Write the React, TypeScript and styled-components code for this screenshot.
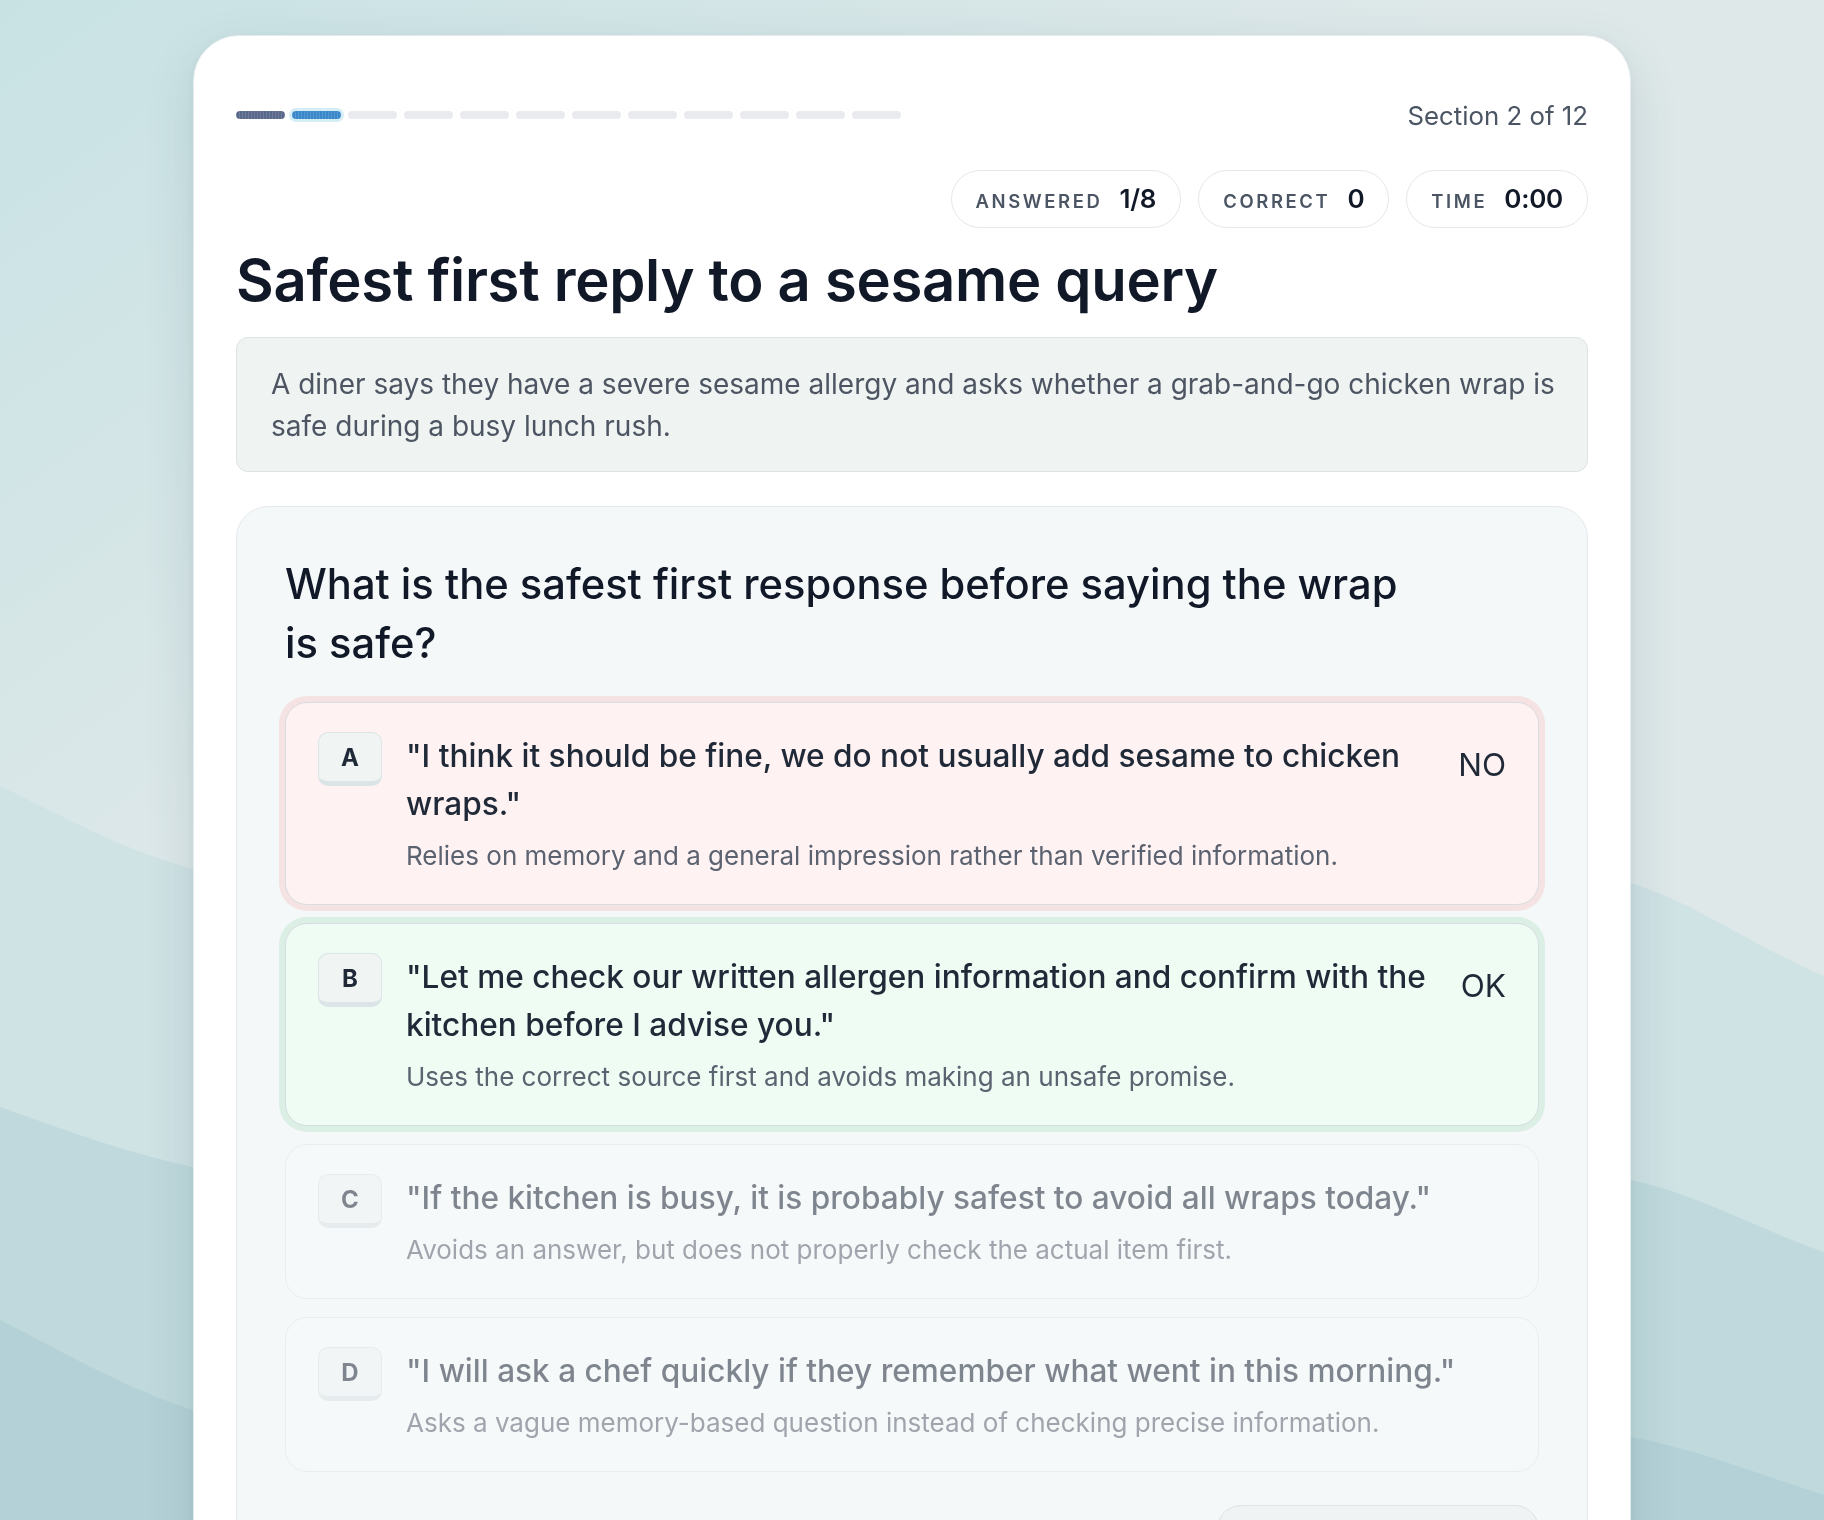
import React from 'react'
import styled, { createGlobalStyle } from 'styled-components'

const GlobalStyle = createGlobalStyle`
  html, body {
    margin: 0;
    padding: 0;
  }
  body {
    font-family: Inter, 'Noto Sans', 'Liberation Sans', sans-serif;
    color: #111827;
    background: #d3e6e8;
    -webkit-font-smoothing: antialiased;
  }
  * {
    box-sizing: border-box;
  }
`

const Backdrop = styled.svg`
  position: fixed;
  inset: 0;
  width: 100%;
  height: 100%;
  z-index: 0;
`

const Page = styled.div`
  position: relative;
  z-index: 1;
  display: flex;
  justify-content: center;
  padding: 35px 0 80px;
`

const Card = styled.main`
  width: 1438px;
  background: #ffffff;
  border: 1px solid #e4ecee;
  border-radius: 46px;
  box-shadow: 0 18px 50px rgba(40, 80, 92, 0.14), 0 2px 8px rgba(40, 80, 92, 0.06);
  padding: 64px 42px 60px;
`

const TopRow = styled.div`
  display: flex;
  align-items: center;
  justify-content: space-between;
  height: 30px;
`

const Progress = styled.div`
  display: flex;
  gap: 7px;
`

const Segment = styled.span<{ $state: 'done' | 'current' | 'todo' }>`
  width: 49px;
  height: 8px;
  border-radius: 4px;
  background: ${p =>
    p.$state === 'done' ? '#58678a' : p.$state === 'current' ? '#3a87c9' : '#e9ebef'};
  background-image: ${p =>
    p.$state === 'todo'
      ? 'none'
      : 'repeating-linear-gradient(90deg, rgba(255,255,255,0.14) 0 1px, transparent 1px 3px)'};
  box-shadow: ${p => (p.$state === 'current' ? '0 0 0 3px #d5edf4' : 'none')};
`

const SectionLabel = styled.span`
  font-size: 25.8px;
  color: #4b5563;
`

const Stats = styled.div`
  display: flex;
  justify-content: flex-end;
  gap: 17px;
  margin-top: 40px;
`

const Chip = styled.div`
  display: flex;
  align-items: baseline;
  gap: 17px;
  height: 58px;
  padding: 12px 24px 0;
  border: 1.5px solid #e5e7eb;
  border-radius: 999px;
  background: #ffffff;
`

const ChipLabel = styled.span`
  font-size: 18.5px;
  font-weight: 600;
  letter-spacing: 0.14em;
  text-transform: uppercase;
  color: #4b5563;
`

const ChipValue = styled.span`
  font-size: 26px;
  font-weight: 600;
  letter-spacing: -0.01em;
  color: #111827;
`

const Title = styled.h1`
  margin: 20px 0 25px;
  font-size: 58px;
  line-height: 64px;
  font-weight: 600;
  letter-spacing: -0.005em;
  color: #111827;
`

const Scenario = styled.p`
  margin: 0;
  padding: 25px 16px 24px 34px;
  background: #eff3f2;
  border: 1.5px solid #dce5e6;
  border-radius: 12px;
  font-size: 28px;
  line-height: 42px;
  color: #4d5562;
`

const Panel = styled.section`
  margin-top: 34px;
  padding: 48px 48px 0;
  background: #f5f8f9;
  border: 1.5px solid #e5eaed;
  border-radius: 32px;
`

const Question = styled.h2`
  margin: 0 0 29px;
  max-width: 1140px;
  font-size: 41.7px;
  line-height: 59px;
  font-weight: 500;
  color: #111827;
`

const OptionList = styled.div`
  display: flex;
  flex-direction: column;
  gap: 18px;
`

type Tone = 'wrong' | 'right' | 'idle'

const toneBg: Record<Tone, string> = { wrong: '#fff2f2', right: '#effcf4', idle: '#f8faf9' }
const toneRing: Record<Tone, string> = { wrong: '#f5e2e2', right: '#dcefe4', idle: 'transparent' }
const toneBorder: Record<Tone, string> = { wrong: '#d9dce1', right: '#d6dde0', idle: '#dfe5e8' }

const Option = styled.div<{ $tone: Tone }>`
  display: grid;
  grid-template-columns: 64px 1fr auto;
  column-gap: 20px;
  padding: 29px 32px 30px;
  background: ${p => toneBg[p.$tone]};
  border: 1.5px solid ${p => toneBorder[p.$tone]};
  border-radius: 22px;
  box-shadow: 0 0 0 6px ${p => toneRing[p.$tone]};
  opacity: ${p => (p.$tone === 'idle' ? 0.55 : 1)};
`

const Key = styled.span`
  display: grid;
  place-items: center;
  width: 64px;
  height: 54px;
  margin-right: 4px;
  background: #f0f4f3;
  border: 1.5px solid #dbe4e6;
  border-bottom-width: 5px;
  border-radius: 10px;
  font-size: 24px;
  font-weight: 700;
  color: #1f2937;
`

const Body = styled.div`
  display: flex;
  flex-direction: column;
  padding-left: 4px;
`

const Answer = styled.span`
  font-size: 31.6px;
  line-height: 48px;
  font-weight: 500;
  color: #1f2937;
`

const Note = styled.span`
  margin-top: 10px;
  font-size: 26px;
  line-height: 36px;
  color: #5b6270;
`

const Verdict = styled.span`
  min-width: 46px;
  padding-top: 9px;
  font-size: 31.5px;
  line-height: 48px;
  text-align: right;
  color: #1f2937;
`

const Footer = styled.div`
  display: flex;
  justify-content: flex-end;
  padding: 33px 0 40px;
`

const NextButton = styled.button`
  width: 322px;
  height: 62px;
  background: #eff3f3;
  border: 1.5px solid #dde4e6;
  border-radius: 24px;
`

const segments: Array<'done' | 'current' | 'todo'> = [
  'done', 'current', 'todo', 'todo', 'todo', 'todo',
  'todo', 'todo', 'todo', 'todo', 'todo', 'todo',
]

const options: Array<{ key: string; text: string; note: string; tone: Tone; verdict?: string }> = [
  {
    key: 'A',
    text: '"I think it should be fine, we do not usually add sesame to chicken wraps."',
    note: 'Relies on memory and a general impression rather than verified information.',
    tone: 'wrong',
    verdict: 'NO',
  },
  {
    key: 'B',
    text: '"Let me check our written allergen information and confirm with the kitchen before I advise you."',
    note: 'Uses the correct source first and avoids making an unsafe promise.',
    tone: 'right',
    verdict: 'OK',
  },
  {
    key: 'C',
    text: '"If the kitchen is busy, it is probably safest to avoid all wraps today."',
    note: 'Avoids an answer, but does not properly check the actual item first.',
    tone: 'idle',
  },
  {
    key: 'D',
    text: '"I will ask a chef quickly if they remember what went in this morning."',
    note: 'Asks a vague memory-based question instead of checking precise information.',
    tone: 'idle',
  },
]

const Waves = () => (
  <Backdrop viewBox="0 0 1824 1520" preserveAspectRatio="none">
    <defs>
      <linearGradient id="sky" gradientUnits="userSpaceOnUse" x1="0" y1="0" x2="500" y2="700">
        <stop offset="0" stopColor="#c8e2e4" />
        <stop offset="1" stopColor="#dee8e9" />
      </linearGradient>
    </defs>
    <rect width="1824" height="1520" fill="url(#sky)" />
    <path
      d="M0 786 C90 830 150 865 260 885 C700 950 1300 800 1631 883 C1700 905 1760 950 1824 976 L1824 1520 L0 1520 Z"
      fill="#cfe2e4"
    />
    <path
      d="M0 1107 C80 1135 140 1160 260 1180 C700 1240 1300 1120 1631 1180 C1700 1195 1760 1230 1824 1252 L1824 1520 L0 1520 Z"
      fill="#bfd9dc"
    />
    <path
      d="M0 1320 C80 1360 140 1400 260 1430 C700 1500 1300 1400 1631 1437 C1700 1450 1760 1475 1824 1495 L1824 1520 L0 1520 Z"
      fill="#b3d1d6"
    />
  </Backdrop>
)

export default function App() {
  return (
    <>
      <GlobalStyle />
      <Waves />
      <Page>
        <Card>
          <TopRow>
            <Progress>
              {segments.map((s, i) => (
                <Segment key={i} $state={s} />
              ))}
            </Progress>
            <SectionLabel>Section 2 of 12</SectionLabel>
          </TopRow>

          <Stats>
            <Chip>
              <ChipLabel>Answered</ChipLabel>
              <ChipValue>1/8</ChipValue>
            </Chip>
            <Chip>
              <ChipLabel>Correct</ChipLabel>
              <ChipValue>0</ChipValue>
            </Chip>
            <Chip>
              <ChipLabel>Time</ChipLabel>
              <ChipValue>0:00</ChipValue>
            </Chip>
          </Stats>

          <Title>Safest first reply to a sesame query</Title>

          <Scenario>
            A diner says they have a severe sesame allergy and asks whether a grab-and-go chicken wrap is
            safe during a busy lunch rush.
          </Scenario>

          <Panel>
            <Question>What is the safest first response before saying the wrap is safe?</Question>
            <OptionList>
              {options.map(o => (
                <Option key={o.key} $tone={o.tone}>
                  <Key>{o.key}</Key>
                  <Body>
                    <Answer>{o.text}</Answer>
                    <Note>{o.note}</Note>
                  </Body>
                  {o.verdict && <Verdict>{o.verdict}</Verdict>}
                </Option>
              ))}
            </OptionList>
            <Footer>
              <NextButton aria-label="Next question" />
            </Footer>
          </Panel>
        </Card>
      </Page>
    </>
  )
}
